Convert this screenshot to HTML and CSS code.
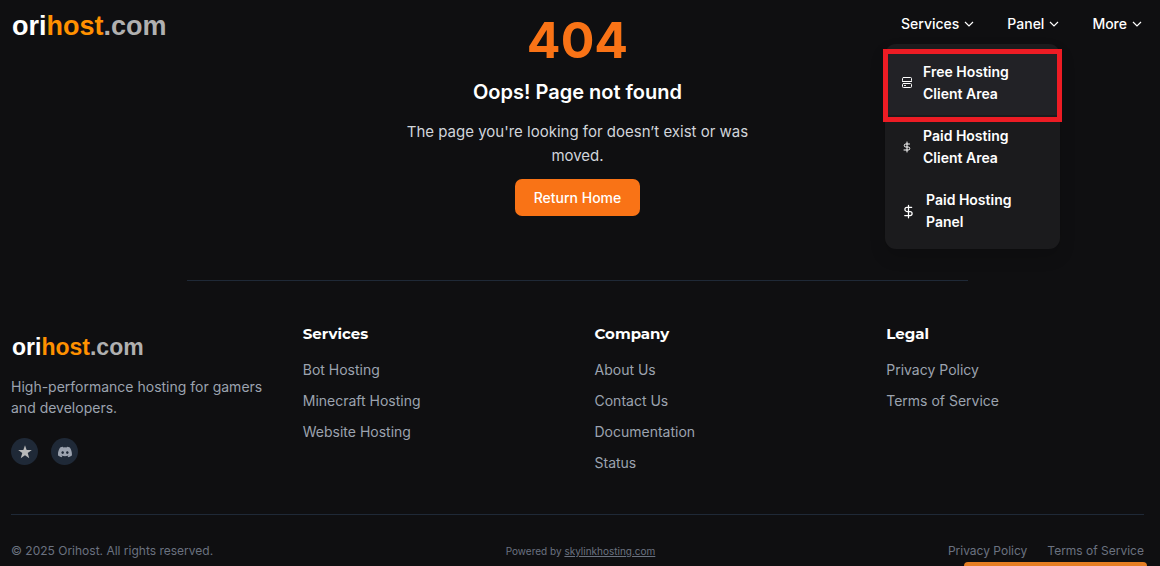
FILE: index.html
```html
<!DOCTYPE html>
<html lang="en">
<head>
<meta charset="utf-8">
<meta name="viewport" content="width=device-width, initial-scale=1">
<title>404 - orihost.com</title>
<link rel="stylesheet" href="styles.css">
</head>
<body>
<header class="site-header">
  <a class="logo" href="#">ori<span class="logo-accent">host</span><span class="logo-muted">.com</span></a>
  <nav class="nav">
    <div class="nav-item">
      <button class="nav-button" type="button" aria-expanded="true">Services
        <svg class="chevron" viewBox="0 0 10 10"><path d="M1 3l4 4 4-4"/></svg>
      </button>
      <div class="menu">
        <a class="menu-link menu-link-active" href="#">
          <svg class="menu-icon" viewBox="0 0 12 12"><rect x="1.500" y=".5" width="9" height="4" rx="1"/><rect x="1.500" y="6.500" width="9" height="4" rx="1"/><path d="M1.500 4.500h9M3.500 8.500h1"/></svg>
          <span>Free Hosting Client Area</span>
        </a>
        <a class="menu-link" href="#">
          <svg class="menu-icon" viewBox="0 0 24 24"><path class="dollar" d="M12 2v20M17 6H9.500a3 3 0 0 0 0 6h5a3 3 0 0 1 0 6H6"/></svg>
          <span>Paid Hosting Client Area</span>
        </a>
        <a class="menu-link" href="#">
          <svg class="menu-icon menu-icon-large" viewBox="0 0 24 24"><path class="dollar" d="M12 2v20M17 5.500H9.500a3.250 3.250 0 0 0 0 6.500h5a3.250 3.250 0 0 1 0 6.500H6"/></svg>
          <span>Paid Hosting Panel</span>
        </a>
      </div>
    </div>
    <div class="nav-item">
      <button class="nav-button" type="button">Panel
        <svg class="chevron" viewBox="0 0 10 10"><path d="M1 3l4 4 4-4"/></svg>
      </button>
    </div>
    <div class="nav-item">
      <button class="nav-button" type="button">More
        <svg class="chevron" viewBox="0 0 10 10"><path d="M1 3l4 4 4-4"/></svg>
      </button>
    </div>
  </nav>
</header>

<main class="error">
  <h1 class="error-code">404</h1>
  <h2 class="error-title">Oops! Page not found</h2>
  <p class="error-text">The page you're looking for doesn’t exist or was moved.</p>
  <a class="home-link" href="#">Return Home</a>
</main>

<footer class="footer">
  <hr class="divider">
  <div class="columns">
    <section class="brand">
      <a class="logo logo-small" href="#">ori<span class="logo-accent">host</span><span class="logo-muted">.com</span></a>
      <p class="tagline">High-performance hosting for gamers and developers.</p>
      <div class="socials">
        <a class="social" href="#" aria-label="Reviews">
          <svg class="social-icon" viewBox="0 0 16 16"><path d="M8 .3l1.900 5.400h5.900l-4.700 3.500 1.800 5.900L8 11.700l-4.900 3.400 1.800-5.900L.2 5.700h5.900z"/></svg>
        </a>
        <a class="social" href="#" aria-label="Discord">
          <svg class="social-icon" viewBox="0 0 24 24"><path fill-rule="evenodd" d="M20.3 4.400A19.800 19.800 0 0 0 15.400 2.900l-.7 1.300a18.300 18.300 0 0 0-5.500 0l-.7-1.300a19.700 19.700 0 0 0-4.900 1.500C.5 9-.3 13.600.1 18.100a19.900 19.900 0 0 0 6 3l1.300-2-1.900-.9.400-.3a14.200 14.200 0 0 0 12.100 0l.4.3-1.900.9 1.300 2a19.800 19.800 0 0 0 6-3c.5-5.200-.8-9.700-3.500-13.700zM8 15.300c-1.200 0-2.200-1.100-2.200-2.400S6.800 10.500 8 10.500s2.200 1.100 2.200 2.400S9.200 15.300 8 15.300zm8 0c-1.200 0-2.200-1.100-2.200-2.400s1-2.400 2.200-2.400 2.200 1.100 2.200 2.400-1 2.400-2.200 2.400z"/></svg>
        </a>
      </div>
    </section>
    <section>
      <h3 class="column-title">Services</h3>
      <ul class="links">
        <li><a href="#">Bot Hosting</a></li>
        <li><a href="#">Minecraft Hosting</a></li>
        <li><a href="#">Website Hosting</a></li>
      </ul>
    </section>
    <section>
      <h3 class="column-title">Company</h3>
      <ul class="links">
        <li><a href="#">About Us</a></li>
        <li><a href="#">Contact Us</a></li>
        <li><a href="#">Documentation</a></li>
        <li><a href="#">Status</a></li>
      </ul>
    </section>
    <section>
      <h3 class="column-title">Legal</h3>
      <ul class="links">
        <li><a href="#">Privacy Policy</a></li>
        <li><a href="#">Terms of Service</a></li>
      </ul>
    </section>
  </div>
  <div class="legal-bar">
    <p>© 2025 Orihost. All rights reserved.</p>
    <p class="powered">Powered by <a href="#">skylinkhosting.com</a></p>
    <div class="legal-links"><a href="#">Privacy Policy</a><a href="#">Terms of Service</a></div>
  </div>
</footer>
<div class="drawer-edge"></div>
</body>
</html>
```
FILE: styles.css
```css
* { box-sizing: border-box; }

body {
  margin: 0;
  background: #0f0f11;
  color: #fff;
  font-family: Inter, "Liberation Sans", sans-serif;
  font-size: 14px;
}

h1, h2, h3, p, ul { margin: 0; padding: 0; }
a { color: inherit; text-decoration: none; }

.site-header {
  position: absolute;
  inset: 0 0 auto;
  z-index: 2;
  display: flex;
  justify-content: space-between;
  align-items: center;
  height: 48px;
  padding: 0 18px 0 12px;
}

.logo {
  font: bold 27px/32px "Liberation Sans", Arial, sans-serif;
  padding-top: 4px;
}
.logo-accent { color: #ff9100; }
.logo-muted { color: #b0b0b0; }
.logo-small {
  display: block;
  font-size: 23px;
  padding: 0 0 0 1px;
}

.nav { display: flex; gap: 33px; }
.nav-item { position: relative; }

.nav-button {
  display: flex;
  align-items: center;
  gap: 5px;
  padding: 0;
  border: 0;
  background: none;
  color: #fff;
  font: 500 14px/22px Inter, sans-serif;
}

.chevron {
  width: 10px;
  height: 10px;
  fill: none;
  stroke: currentColor;
  stroke-width: 1.200;
}

.menu {
  position: absolute;
  top: 31px;
  left: -16px;
  width: 175px;
  padding: 7px 0 6px;
  border-radius: 11px;
  background: #1b1b1d;
  box-shadow: 0 8px 16px rgba(0, 0, 0, 0.15);
}

.menu-link {
  position: relative;
  display: flex;
  align-items: center;
  gap: 10px;
  padding: 10px 40px 10px 16px;
  font-weight: 600;
  line-height: 22px;
}
.menu-link-active { background: #222226; }
.menu-link-active::after {
  content: "";
  position: absolute;
  inset: -2px -2px -7px;
  border: 5px solid #ed1c24;
}

.menu-icon {
  flex: none;
  width: 12px;
  height: 12px;
  fill: none;
  stroke: currentColor;
  stroke-width: 1;
  stroke-linecap: round;
}
.menu-icon-large { width: 15px; height: 15px; }
.dollar { stroke-width: 2; }

.error {
  display: flex;
  flex-direction: column;
  align-items: center;
  max-width: 376px;
  margin: 0 auto;
  padding: 13px 5px 64px 0;
  text-align: center;
}
.error-code {
  color: #f97316;
  font-size: 50px;
  font-weight: 700;
  line-height: 54px;
}
.error-title {
  margin-top: 11px;
  font-size: 20px;
  font-weight: 600;
  line-height: 28px;
}
.error-text {
  margin-top: 14px;
  color: #d1d5db;
  font-size: 15px;
  line-height: 24px;
}
.home-link {
  margin-top: 11px;
  padding: 8px 19px;
  border-radius: 7px;
  background: #f97316;
  font-weight: 500;
  line-height: 21px;
}

.footer { padding: 0 16px 0 11px; }

.divider {
  width: 69%;
  height: 1px;
  margin: 0 auto;
  border: 0;
  background: #1f2937;
}

.columns {
  display: grid;
  grid-template-columns: repeat(4, 1fr);
  gap: 34px;
  padding: 41px 0;
}

.brand { padding-top: 9px; }
.tagline {
  margin-top: 13px;
  color: #9ca3af;
  line-height: 21px;
}
.socials {
  display: flex;
  gap: 13px;
  margin-top: 20px;
}
.social {
  display: grid;
  place-items: center;
  width: 27px;
  height: 27px;
  border-radius: 50%;
  background: #1f2937;
  color: #9ca3af;
}
.social-icon {
  width: 14px;
  height: 14px;
  fill: currentColor;
}
.social:first-child { color: #b8b8b8; }

.column-title {
  font-family: Montserrat, Inter, sans-serif;
  font-size: 15px;
  font-weight: 700;
  line-height: 24px;
}
.links {
  display: grid;
  gap: 10px;
  margin-top: 13px;
  color: #9ca3af;
  line-height: 21px;
  list-style: none;
}

.legal-bar {
  display: flex;
  justify-content: space-between;
  align-items: center;
  padding-top: 27px;
  border-top: 1px solid #1f2937;
  color: #6b7280;
  font-size: 12px;
  line-height: 18px;
}
.powered { font-size: 10px; }
.powered a { text-decoration: underline; }
.legal-links { display: flex; gap: 20px; }

.drawer-edge {
  position: fixed;
  right: 13px;
  bottom: 0;
  z-index: 3;
  width: 183px;
  height: 4px;
  border-radius: 5px 5px 0 0;
  background: #e67e22;
}
```
